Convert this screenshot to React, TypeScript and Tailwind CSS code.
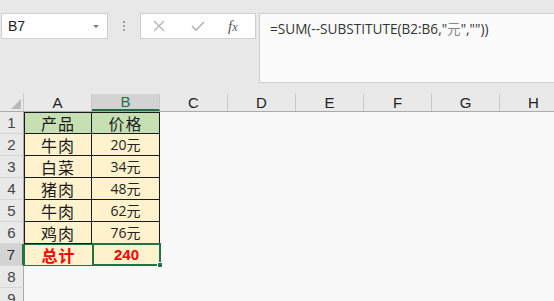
import React from 'react';

const COLS = ['A', 'B', 'C', 'D', 'E', 'F', 'G', 'H'];

const rows = [
  { name: '产品', price: '价格', head: true },
  { name: '牛肉', price: '20元' },
  { name: '白菜', price: '34元' },
  { name: '猪肉', price: '48元' },
  { name: '牛肉', price: '62元' },
  { name: '鸡肉', price: '76元' },
];

const cjk = { fontFamily: '"Noto Sans CJK SC", "Noto Sans", sans-serif' };
const latin = { fontFamily: '"Liberation Sans", "Noto Sans CJK SC", sans-serif' };
const ui = { fontFamily: '"Open Sans", "Noto Sans CJK SC", sans-serif' };

function RowHead({ n, active }: { n: number; active?: boolean }) {
  return (
    <div
      className={`w-[24px] h-[22px] shrink-0 flex items-center justify-center text-[15px] leading-none border-b border-[#d6d6d6] ${
        active ? 'bg-[#d3d3d3] text-[#2b2b2b] border-r-2 border-r-[#217346]' : 'bg-[#e9e9e9] text-[#444] border-r border-r-[#ababab]'
      }`}
      style={latin}
    >
      {n}
    </div>
  );
}

export default function App() {
  return (
    <div className="w-[554px] h-[301px] overflow-hidden bg-[#e8e8e8] flex flex-col">
      {/* Formula bar */}
      <div className="h-[94px] shrink-0 flex items-start pt-[13px]">
        <div className="ml-[1px] w-[107px] h-[26px] bg-white border border-[#cfcfcf] flex items-center justify-between pl-[6px] pr-[8px]">
          <span className="text-[14px] text-[#222]" style={latin}>B7</span>
          <span className="w-0 h-0 border-l-[3px] border-r-[3px] border-t-[3px] border-l-transparent border-r-transparent border-t-[#7a7a7a]" />
        </div>
        <div className="w-[32px] h-[26px] flex flex-col items-center justify-center gap-[2px]">
          <span className="w-[2px] h-[2px] bg-[#a0a0a0]" />
          <span className="w-[2px] h-[2px] bg-[#a0a0a0]" />
          <span className="w-[2px] h-[2px] bg-[#a0a0a0]" />
        </div>
        <div className="w-[116px] h-[26px] bg-white border border-[#cfcfcf] flex items-center">
          <svg width="14" height="14" viewBox="0 0 14 14" className="ml-[11px]">
            <path d="M2 2 L12 12 M12 2 L2 12" stroke="#b5b5b5" strokeWidth="1.4" fill="none" />
          </svg>
          <svg width="14" height="12" viewBox="0 0 14 12" className="ml-[25px]">
            <path d="M1 6 L5 10 L13 2" stroke="#b5b5b5" strokeWidth="1.6" fill="none" />
          </svg>
          <span className="ml-[23px] text-[15px] italic text-[#555]" style={{ fontFamily: '"Liberation Serif", serif' }}>
            f<span className="text-[12px]">x</span>
          </span>
        </div>
        <div className="ml-[3px] flex-1 -mr-[4px] h-[70px] bg-[#fbfbfb] border border-[#cfcfcf] pl-[10px] pt-[2px]">
          <span className="text-[13.6px] text-[#333]" style={ui}>
            =SUM(--SUBSTITUTE(B2:B6,"<span className="text-[#888]">元</span>",""))
          </span>
        </div>
      </div>

      {/* Column headers */}
      <div className="h-[18px] shrink-0 flex border-b border-[#ababab]">
        <div className="w-[24px] shrink-0 bg-[#e9e9e9] border-r border-[#c8c8c8] flex items-end justify-end p-[2px]">
          <svg width="10" height="10" viewBox="0 0 10 10">
            <path d="M10 0 L10 10 L0 10 Z" fill="#b9b9b9" />
          </svg>
        </div>
        {COLS.map((c) => (
          <div
            key={c}
            className={`w-[68px] shrink-0 flex items-center justify-center text-[15px] leading-none border-r border-[#c8c8c8] ${
              c === 'B' ? 'bg-[#d3d3d3] text-[#217346] border-b-2 border-b-[#217346]' : 'bg-[#e9e9e9] text-[#222]'
            }`}
            style={latin}
          >
            {c}
          </div>
        ))}
      </div>

      {/* Grid */}
      <div className="flex-1 bg-[#f8f8f8] flex flex-col">
        {rows.map((r, i) => (
          <div key={i} className="flex">
            <RowHead n={i + 1} />
            <div
              className={`w-[68px] h-[22px] shrink-0 flex items-center justify-center text-[16px] leading-none tracking-[1px] text-[#1a1a1a] border-l border-r border-b border-[#1a1a1a] ${
                r.head ? 'bg-[#c6e0b4] border-t' : 'bg-[#fff2cc]'
              }`}
              style={cjk}
            >
              {r.name}
            </div>
            <div
              className={`w-[68px] h-[22px] shrink-0 flex items-center justify-center leading-none border-r border-b border-[#1a1a1a] text-[#222] ${
                r.head ? 'bg-[#c6e0b4] border-t text-[16px] tracking-[1px]' : 'bg-[#fff2cc] text-[14px]'
              }`}
              style={r.head ? cjk : ui}
            >
              {r.price}
            </div>
          </div>
        ))}
        <div className="flex">
          <RowHead n={7} active />
          <div
            className="w-[68px] h-[22px] shrink-0 flex items-center justify-center text-[16px] leading-none tracking-[1px] font-bold text-[#ff0000] bg-[#fff2cc] border border-r-0 border-[#217346]"
            style={cjk}
          >
            总计
          </div>
          <div
            className="relative w-[69px] h-[23px] -mt-[1px] shrink-0 flex items-center justify-center text-[15px] leading-none font-bold text-[#ff0000] bg-[#fff2cc] border-2 border-[#217346]"
            style={latin}
          >
            240
            <span className="absolute -right-[4px] -bottom-[4px] w-[6px] h-[6px] bg-[#217346] border border-white" />
          </div>
        </div>
        <RowHead n={8} />
        <RowHead n={9} />
      </div>
    </div>
  );
}
